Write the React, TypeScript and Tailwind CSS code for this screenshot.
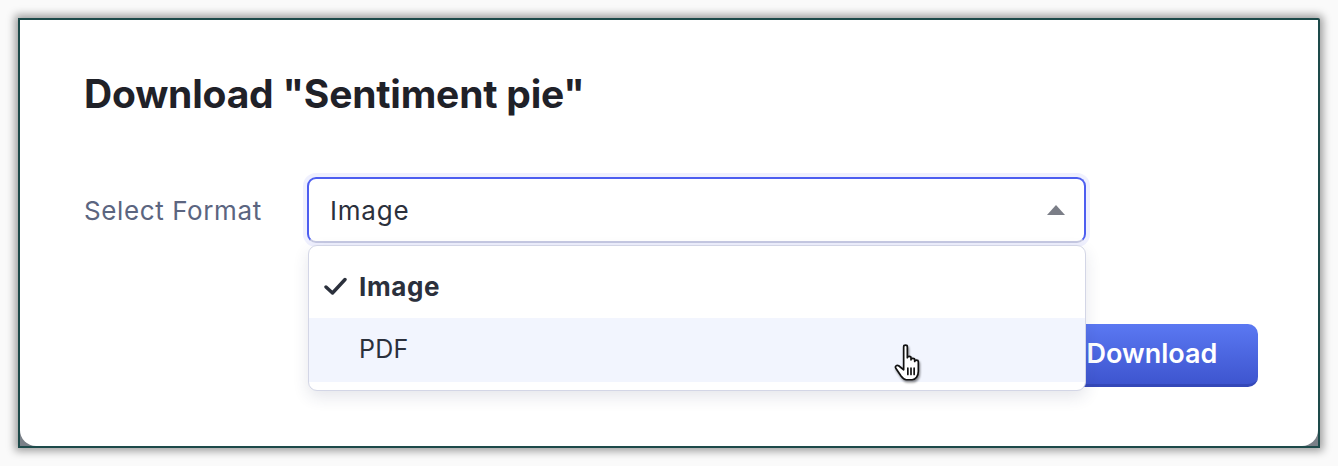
import React from "react";

function HandCursor() {
  return (
    <svg width="36" height="44" viewBox="0 0 34 42" className="drop-shadow-[1px_2px_1px_rgba(0,0,0,0.45)]">
      <path
        d="M10 4.5 C10 2.5 13.5 2.5 13.5 4.5 L13.5 15 C13.5 13.2 17 13.2 17 15 L17 17 C17 15.2 20.5 15.2 20.5 17 L20.5 18.5 C20.5 16.8 24 16.8 24 18.5 L24 28 C24 32.5 21.5 36 18 36 L12.5 36 C10.5 36 9 34.5 7.5 32.5 L2.5 25 C1.3 23.2 3.5 21.5 5.2 22.7 L10 26.5 Z"
        fill="#ffffff"
        stroke="#111111"
        strokeWidth="1.6"
        strokeLinejoin="round"
      />
      <path d="M14 25 L14 31 M17 25 L17 31 M20 25 L20 31" stroke="#111111" strokeWidth="1.6" strokeLinecap="round" />
    </svg>
  );
}

export default function App() {
  const font = { fontFamily: "Inter, 'Noto Sans', sans-serif" };
  return (
    <div className="w-[1338px] h-[466px] bg-[#fafafa] p-[18px]" style={font}>
      <div className="w-[1302px] h-[430px] border-2 border-[#1d4a4a] bg-[#7a8088] shadow-[0_0_9px_3px_rgba(0,0,0,0.38)] rounded-tr-[2px]">
        <div className="relative w-full h-full bg-white rounded-b-[16px] pl-[64px] pr-[60px] pt-[50px] flex flex-col">
          <h2 className="text-[39px] leading-[48px] font-bold text-[#1f2128] tracking-[-0.2px]">
            Download "Sentiment pie"
          </h2>
          <div className="mt-[59px] flex items-center">
            <div className="w-[223px] text-[26px] tracking-[0.6px] text-[#5b6580]">Select Format</div>
            <div className="relative">
              <div className="w-[779px] h-[66px] rounded-[9px] border-2 border-[#4d5ef0] border-b-[#c6c9e2] shadow-[0_0_0_4px_rgba(120,135,245,0.12)] flex items-center justify-between pl-[21px] pr-[19px]">
                <span className="text-[26px] tracking-[0.8px] text-[#2b303c]">Image</span>
                <svg width="18" height="10" viewBox="0 0 18 10">
                  <path d="M9 0 L18 10 L0 10 Z" fill="#7b7e87" />
                </svg>
              </div>
              <div className="absolute left-[1px] top-[68px] w-[778px] z-10 bg-white border border-[#d3d6e6] rounded-[9px] shadow-[0_6px_16px_rgba(40,50,90,0.12)] py-[8px]">
                <div className="h-[64px] flex items-center pl-[15px] text-[26px] tracking-[0.6px] font-bold text-[#2b303c]">
                  <svg width="24" height="20" viewBox="0 0 24 20" className="mr-[11px]">
                    <path d="M2 11 L8.5 17 L21 3.5" fill="none" stroke="#2b303c" strokeWidth="3.4" strokeLinecap="round" strokeLinejoin="round" />
                  </svg>
                  Image
                </div>
                <div className="h-[64px] flex items-center pl-[50px] text-[25px] tracking-[0.3px] text-[#2b303c] bg-[#f2f5fe]">
                  PDF
                </div>
              </div>
            </div>
          </div>
          <div className="mt-[81px] flex justify-end">
            <button className="w-[212px] h-[63px] rounded-[10px] bg-gradient-to-b from-[#5b78f2] to-[#3e55cf] border-b-[3px] border-[#3448b8] text-white text-[27px] font-semibold">
              Download
            </button>
          </div>
          <div className="absolute left-[873px] top-[322px] z-20">
            <HandCursor />
          </div>
        </div>
      </div>
    </div>
  );
}
